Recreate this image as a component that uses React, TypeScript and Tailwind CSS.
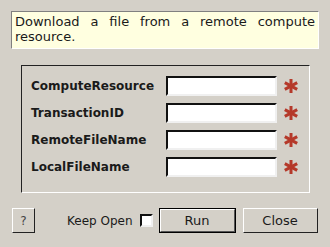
import React, { useState } from 'react';

const fields = ['ComputeResource', 'TransactionID', 'RemoteFileName', 'LocalFileName'];

const Asterisk: React.FC = () => (
  <svg width="16" height="16" viewBox="0 0 16 16" className="shrink-0">
    <g stroke="#b5392a" strokeWidth="3" strokeLinecap="butt">
      <line x1="8" y1="1" x2="8" y2="15" />
      <line x1="1.8" y1="4.6" x2="14.2" y2="11.4" />
      <line x1="1.8" y1="11.4" x2="14.2" y2="4.6" />
    </g>
  </svg>
);

const App: React.FC = () => {
  const [keepOpen, setKeepOpen] = useState(false);
  const [values, setValues] = useState<Record<string, string>>({});

  return (
    <div
      className="w-[330px] h-[247px] bg-[#d4d0c8] text-[#1a1a1a] overflow-hidden flex flex-col"
      style={{ fontFamily: '"DejaVu Sans", sans-serif' }}
    >
      {/* description */}
      <div className="mt-[11px] mx-[11px] w-[308px] h-[38px] bg-[#ffffe0] border border-t-[#808080] border-l-[#808080] border-r-white border-b-white px-[3px] pt-[2px] text-[13px] leading-[15px] text-justify">
        Download a file from a remote compute resource.
      </div>

      {/* parameters */}
      <div className="mt-[16px] ml-[21px] w-[289px] h-[128px] border border-t-[#222] border-l-[#222] border-r-white border-b-white flex flex-col pt-[10px] pl-[9px] gap-[7px]">
        {fields.map((f) => (
          <div key={f} className="flex items-center h-[20px]">
            <span className="w-[135px] text-[12px] font-bold whitespace-nowrap">{f}</span>
            <input
              value={values[f] ?? ''}
              onChange={(e) => setValues({ ...values, [f]: e.target.value })}
              className="w-[111px] h-[20px] bg-white border-2 border-t-[#111] border-l-[#111] border-r-[#f0f0f0] border-b-[#f0f0f0] outline-none px-1 text-[12px]"
            />
            <span className="ml-[6px]">
              <Asterisk />
            </span>
          </div>
        ))}
      </div>

      {/* buttons */}
      <div className="mt-[15px] flex items-center h-[25px]">
        <button className="ml-[12px] w-[23px] h-[25px] border border-t-white border-l-white border-r-[#222] border-b-[#222] text-[12px] text-[#444]">
          ?
        </button>
        <span className="ml-[32px] text-[12px]">Keep Open</span>
        <input
          type="checkbox"
          checked={keepOpen}
          onChange={() => setKeepOpen(!keepOpen)}
          className="ml-[7px] appearance-none w-[13px] h-[13px] bg-white border-2 border-t-[#111] border-l-[#111] border-r-[#f0f0f0] border-b-[#f0f0f0]"
        />
        <button className="ml-[6px] w-[77px] h-[25px] border border-black text-[13px]">
          <div className="w-full h-full border border-t-white border-l-white border-r-[#555] border-b-[#555] flex items-center justify-center">
            Run
          </div>
        </button>
        <button className="ml-[7px] w-[75px] h-[25px] border border-t-white border-l-white border-r-[#222] border-b-[#222] text-[13px]">
          Close
        </button>
      </div>
    </div>
  );
};

export default App;
